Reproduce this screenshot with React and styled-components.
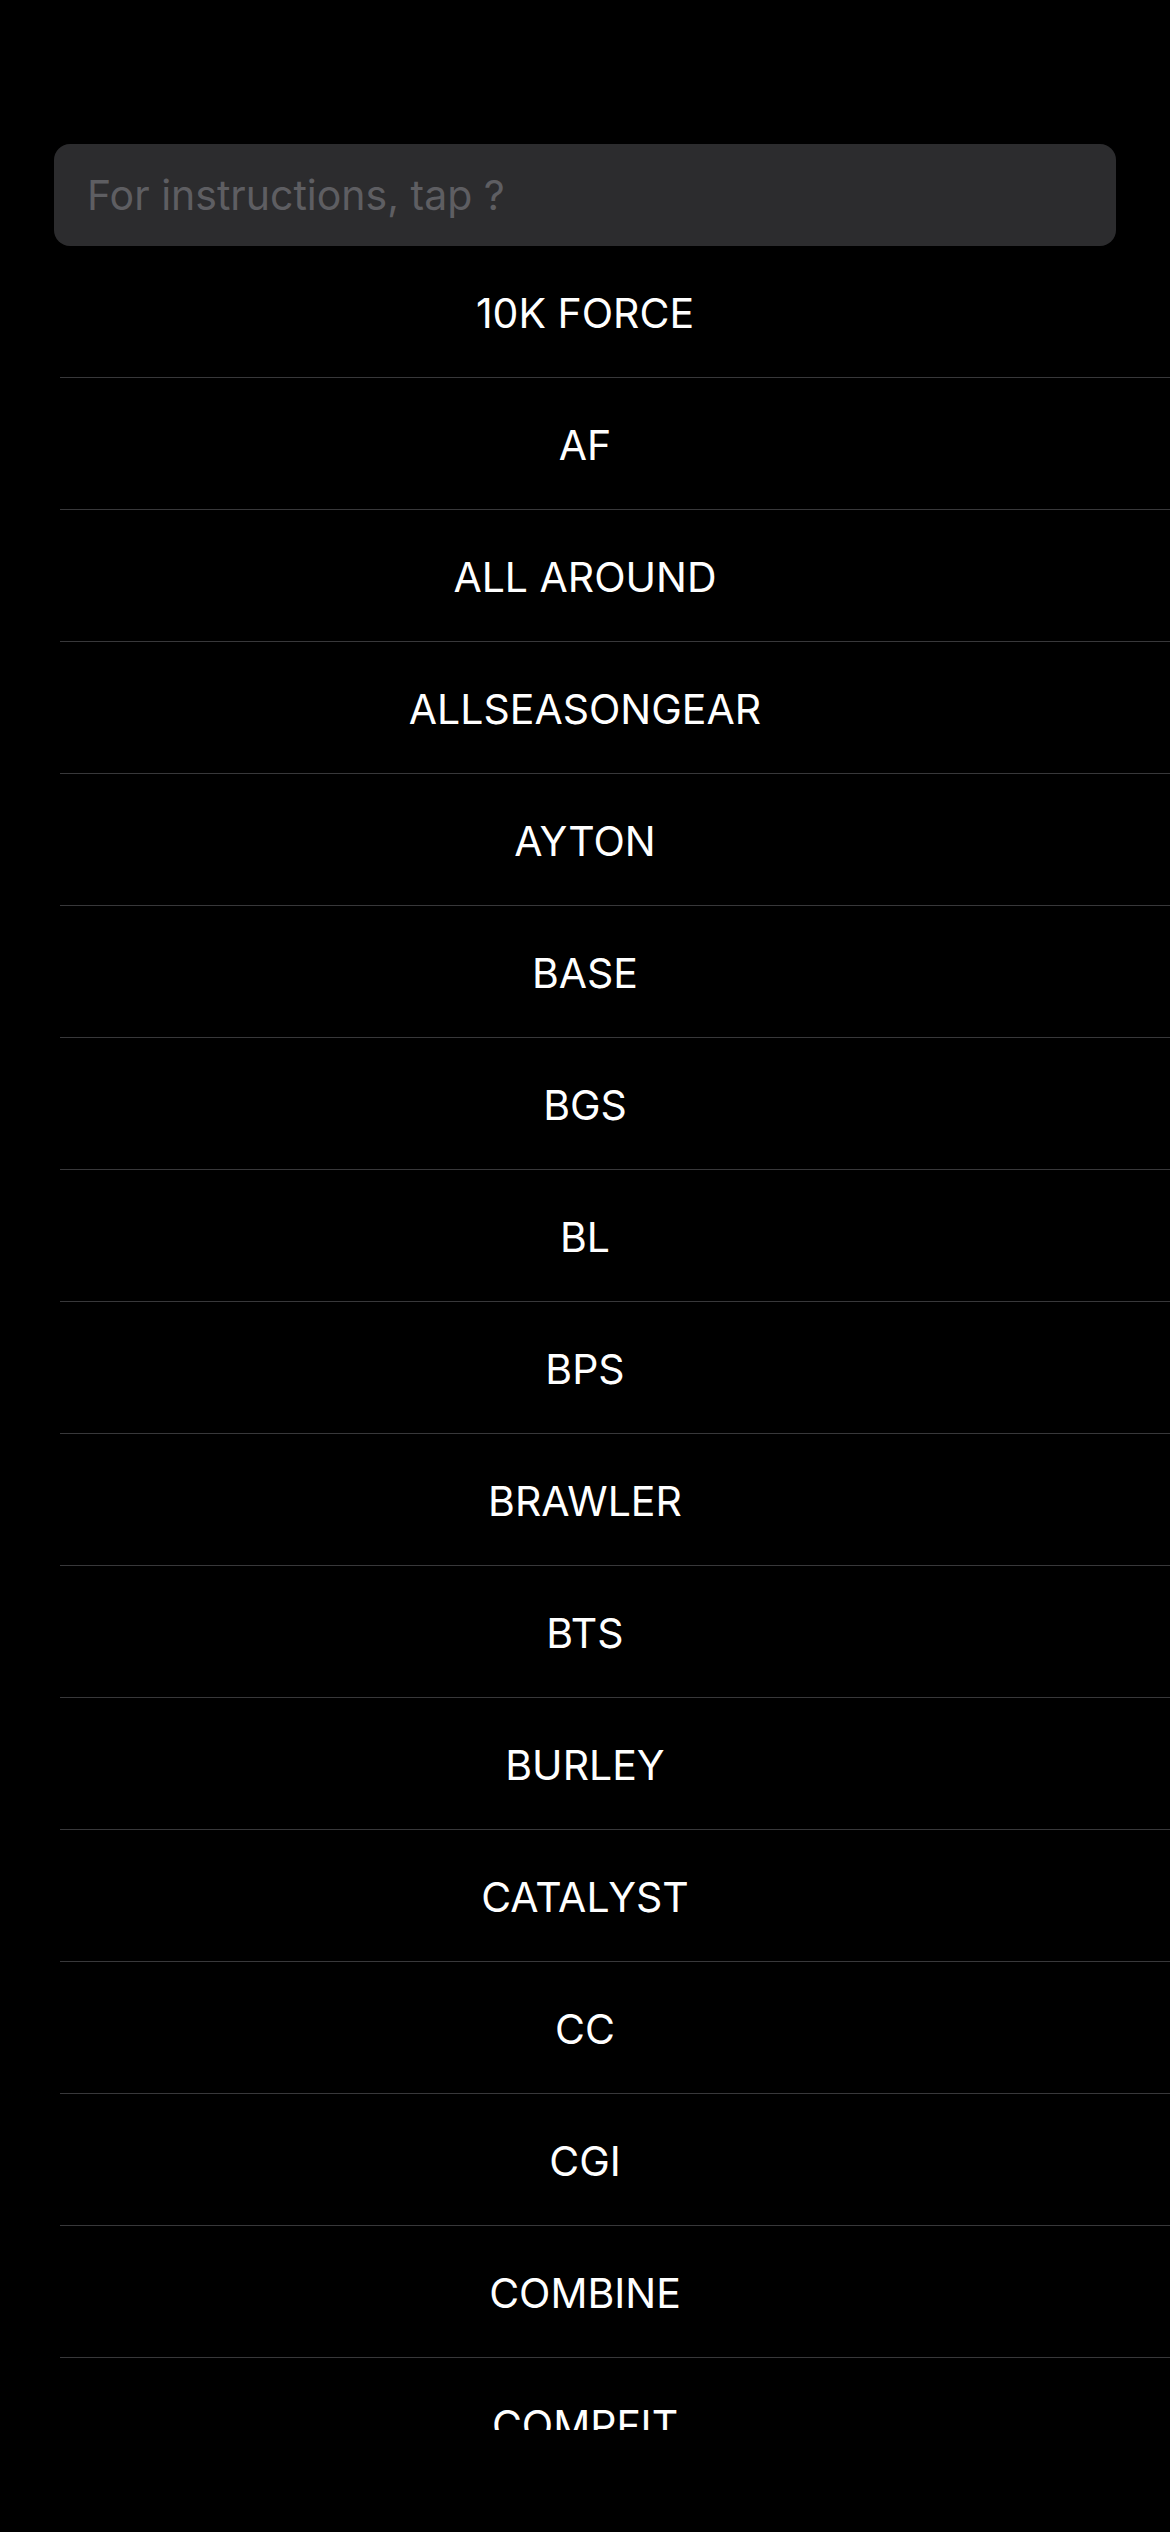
import { Fragment } from 'react';
import styled, { createGlobalStyle } from 'styled-components';

const GlobalStyle = createGlobalStyle`
  html, body {
    margin: 0;
    padding: 0;
    background: #000;
  }
  body {
    font-family: Inter, "Noto Sans", "Liberation Sans", sans-serif;
    -webkit-font-smoothing: antialiased;
  }
`;

const Screen = styled.div`
  width: 1170px;
  height: 2532px;
  background: #000;
  display: flex;
  flex-direction: column;
  overflow: hidden;
`;

const SearchWrap = styled.div`
  padding: 144px 54px 0 54px;
`;

const SearchInput = styled.input`
  box-sizing: border-box;
  width: 100%;
  height: 102px;
  border: none;
  outline: none;
  border-radius: 16px;
  background: #2c2c2e;
  padding: 0 33px;
  font-family: inherit;
  font-size: 41px;
  color: #fff;

  &::placeholder {
    color: #5e5e62;
  }
`;

const List = styled.div`
  height: 2184px;
  overflow: hidden;
  display: flex;
  flex-direction: column;
`;

const Row = styled.div`
  flex: 0 0 131px;
  display: flex;
  align-items: center;
  justify-content: center;
  color: #fff;
  font-size: 41px;
  padding-top: 2px;
  box-sizing: border-box;
`;

const Divider = styled.div`
  flex: 0 0 1px;
  margin-left: 60px;
  background: #38383a;
`;

const brands = [
  '10K FORCE',
  'AF',
  'ALL AROUND',
  'ALLSEASONGEAR',
  'AYTON',
  'BASE',
  'BGS',
  'BL',
  'BPS',
  'BRAWLER',
  'BTS',
  'BURLEY',
  'CATALYST',
  'CC',
  'CGI',
  'COMBINE',
  'COMPFIT',
];

const App = () => {
  return (
    <>
      <GlobalStyle />
      <Screen>
        <SearchWrap>
          <SearchInput placeholder="For instructions, tap ?" />
        </SearchWrap>
        <List>
          {brands.map((name, i) => (
            <Fragment key={name}>
              <Row>{name}</Row>
              {i < brands.length - 1 && <Divider />}
            </Fragment>
          ))}
        </List>
      </Screen>
    </>
  );
};

export default App;
